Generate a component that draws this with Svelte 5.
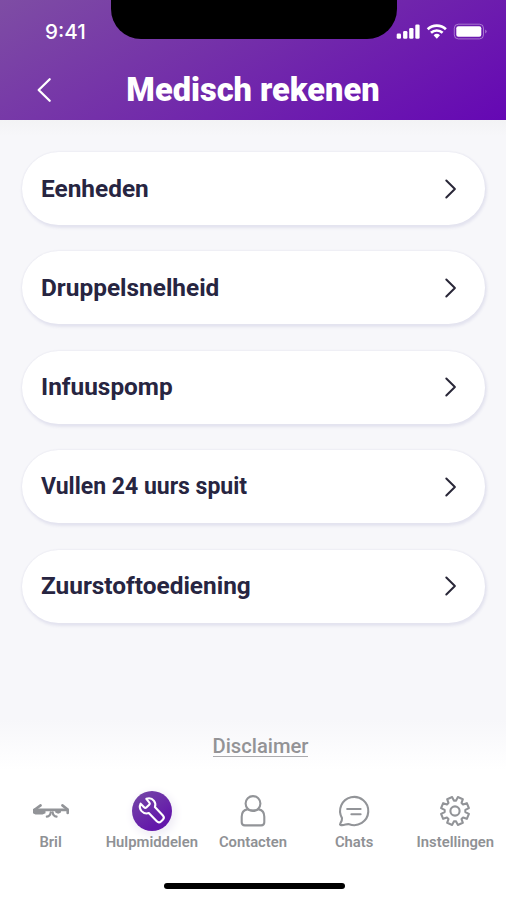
<script lang="ts">
	const items = [
		{ label: 'Eenheden' },
		{ label: 'Druppelsnelheid' },
		{ label: 'Infuuspomp' },
		{ label: 'Vullen 24 uurs spuit', long: true },
		{ label: 'Zuurstoftoediening' },
	]

	const tabs = [
		{ id: 'bril', label: 'Bril' },
		{ id: 'tools', label: 'Hulpmiddelen' },
		{ id: 'contacts', label: 'Contacten' },
		{ id: 'chats', label: 'Chats' },
		{ id: 'settings', label: 'Instellingen' },
	]

	let active = $state('tools')

	// outline of an eight-toothed gear, centred on 20,20
	const gear = Array.from({ length: 8 }, (_, i) => {
		const point = (radius: number, degrees: number) => {
			const a = ((i * 45 + degrees) * Math.PI) / 180
			return `${(20 + radius * Math.cos(a)).toFixed(2)},${(20 + radius * Math.sin(a)).toFixed(2)}`
		}
		return [point(10.4, 6), point(14.2, 11.5), point(14.2, 33.5), point(10.4, 39)].join(' ')
	}).join(' ')
</script>

<main class="screen">
	<header>
		<div class="notch"></div>
		<div class="status">
			<time>9:41</time>
			<svg width="92" height="18" viewBox="0 0 92 18" fill="none">
				<g fill="#fff">
					<rect x="0.7" y="10.5" width="4.3" height="5.2" rx="1.3" />
					<rect x="7.1" y="8" width="4.3" height="7.7" rx="1.3" />
					<rect x="13.2" y="5" width="4.3" height="10.7" rx="1.3" />
					<rect x="19.3" y="1.5" width="4.3" height="14.2" rx="1.3" />
					<path d="M37.6 12.3a4.8 4.8 0 0 1 6.4 0l-3.2 3.5z" />
					<rect x="60.3" y="3.3" width="25" height="10.5" rx="2" />
					<path d="M89.2 6.4q3 2.1 0 4.2z" opacity=".4" />
				</g>
				<path d="M31.7 6.2a13.2 13.2 0 0 1 18.2 0M35 9.8a8.5 8.5 0 0 1 11.6 0" stroke="#fff" stroke-width="2.7" />
				<rect x="58.3" y="1.2" width="29.2" height="14.7" rx="4" stroke="#fff" stroke-width="1" opacity=".4" />
			</svg>
		</div>
		<div class="title-bar">
			<button class="back" aria-label="Terug">
				<svg width="16" height="26" viewBox="0 0 16 26"><path d="M13.7 2.3 2.7 13l11 10.7" /></svg>
			</button>
			<h1>Medisch rekenen</h1>
		</div>
	</header>

	<section class="list">
		{#each items as item}
			<button class="card" class:long={item.long}>
				<span>{item.label}</span>
				<svg width="14" height="22" viewBox="0 0 14 22"><path d="m2.3 2.5 8.6 8.5-8.6 8.5" /></svg>
			</button>
		{/each}
	</section>

	<footer>
		<a class="disclaimer" href="#disclaimer">Disclaimer</a>
		<nav>
			{#each tabs as tab}
				<button class="tab" onclick={() => (active = tab.id)}>
					<span class="icon" class:active={active === tab.id}>
						<svg width="40" height="40" viewBox="0 0 40 40">
							{#if tab.id === 'bril'}
								<path class="temple" d="M4.2 18.2 9.6 14.4M36.4 18.2 31.4 14.4" />
								<path class="frame" d="M3.3 18.9h33.4v3" />
								<path class="solid" d="M2 18h12.5v4.2l-3 1.4H4.4L2 22.2zM24 18h6.5l-.8 3.8-2.6.9-2.8-1.2z" />
								<path class="nose" d="M15.8 25.6q3.6-.4 3.9-4.2M25.6 25.6q-3.6-.4-3.9-4.2" />
							{:else if tab.id === 'tools'}
								<path
									class="wrench"
									transform="translate(-.9 -.7)"
									d="M15.2 8.5c2.7-1 5.9-.2 7.7 2.1 1.4 1.8 1.7 4.1.9 6.2l8 8.3c1.2 1.3 1.1 3.1-.1 4.3l-1.8 1.7c-1.2 1.1-3 1.1-4.2-.1l-8-8.2c-2.5.8-5.4 0-7.2-2-1.8-2.1-2.2-4.9-1-7.4l3.5 3.6q1.2 1.2 2.5 0l2.6-2.5q1.2-1.2 0-2.4z"
								/>
							{:else if tab.id === 'contacts'}
								<circle cx="20" cy="12.5" r="7.4" />
								<path d="M14.1 18.4c-3.5.7-5.4 3.6-5.4 7.4v5.5q0 3.1 3.1 3.1h16.4q3.1 0 3.1-3.1v-5.5c0-3.8-1.9-6.7-5.4-7.4q-5.9 2.4-11.8 0z" />
							{:else if tab.id === 'chats'}
								<path d="M8 27.1a14.1 14.1 0 1 1 7.2 6.1c-2.7-.7-4.6 1.4-8.1.9q-1.7-.2-.8-1.6c1-1.7 2-3.5 1.7-5.4z" />
								<path class="line" d="M13.2 18h13.4M17.4 23.3h9.2" />
							{:else}
								<polygon points={gear} />
								<circle cx="20" cy="20" r="4.6" />
							{/if}
						</svg>
					</span>
					<span class="label">{tab.label}</span>
				</button>
			{/each}
		</nav>
		<div class="home-indicator"></div>
	</footer>
</main>

<style>
	:global(body) {
		margin: 0;
		background: #fff;
	}

	.screen {
		display: flex;
		flex-direction: column;
		box-sizing: border-box;
		width: 507px;
		height: 900px;
		overflow: hidden;
		padding-right: 1px;
		background: #fff;
		font-family: Roboto, 'Liberation Sans', sans-serif;
	}

	button {
		margin: 0;
		border: 0;
		background: none;
		padding: 0;
		font: inherit;
		cursor: pointer;
	}

	svg {
		display: block;
	}

	header {
		position: relative;
		flex: none;
		height: 119.5px;
		background: linear-gradient(150deg, #7e4da4 0%, #7430a9 42%, #6507b4 100%);
		color: #fff;
	}

	.notch {
		position: absolute;
		top: 0;
		left: 111px;
		width: 286px;
		height: 38.5px;
		border-radius: 0 0 30px 30px;
		background: #000;
	}

	.status {
		display: flex;
		justify-content: space-between;
		align-items: center;
		box-sizing: border-box;
		height: 62px;
		padding: 2px 18px 0 45px;
	}

	.status time {
		padding-bottom: 2px;
		font-weight: 500;
		font-size: 20.6px;
		font-family: Inter, Roboto, sans-serif;
	}

	.title-bar {
		display: grid;
		grid-template-columns: 90px 1fr 90px;
		align-items: center;
		height: 56px;
	}

	.back {
		justify-self: start;
		margin-left: 36px;
	}

	.back path,
	.card path {
		fill: none;
		stroke: #fff;
		stroke-width: 2.3;
		stroke-linecap: round;
		stroke-linejoin: round;
	}

	h1 {
		margin: 0;
		font-weight: 900;
		font-size: 32.6px;
		line-height: 40px;
		text-align: center;
		white-space: nowrap;
	}

	.list {
		display: flex;
		flex: 1;
		flex-direction: column;
		gap: 26.4px;
		background: linear-gradient(#f3f3f5 0, #f7f7fa 16px);
		padding: 32.5px 21px 0 22px;
	}

	.card {
		display: flex;
		flex: none;
		justify-content: space-between;
		align-items: center;
		box-sizing: border-box;
		height: 73px;
		border-radius: 37px;
		box-shadow:
			1px 2px 3px 1px #e3e3ef,
			0 0 2px #e3e3ec;
		background: #fff;
		padding: 0 27px 0 19px;
		color: #272541;
		font-weight: 700;
		font-size: 24.4px;
	}

	.card span {
		padding-bottom: 1px;
	}

	.card.long {
		font-size: 23px;
	}

	.card.long span {
		padding-bottom: 0;
	}

	.card path {
		stroke: #292738;
		stroke-width: 2;
	}

	footer {
		display: flex;
		flex: none;
		flex-direction: column;
		align-items: center;
		height: 180px;
		background: linear-gradient(#f7f7fa, #fff 50px);
	}

	.disclaimer {
		margin: 16px 0 0 15px;
		border-bottom: 1.5px solid #ababae;
		color: #939396;
		font-weight: 500;
		font-size: 20.2px;
		line-height: 20px;
		text-decoration: none;
	}

	nav {
		display: grid;
		grid-template-columns: repeat(5, 101.2px);
		width: 506px;
		margin-top: 34px;
	}

	.tab {
		display: flex;
		flex-direction: column;
		align-items: center;
		color: #8f9195;
	}

	.icon {
		border-radius: 50%;
	}

	.icon svg {
		fill: none;
		stroke: #929498;
		stroke-width: 2.1;
		stroke-linejoin: round;
		stroke-linecap: round;
	}

	.icon.active {
		background: linear-gradient(145deg, #764aa7, #6418aa 75%);
		box-shadow: 2px 3px 8px 2px #f0edf6;
	}

	.icon.active svg {
		stroke: #fff;
	}

	.icon .solid {
		fill: #929498;
		stroke: none;
	}

	.icon .temple,
	.icon .frame {
		stroke-width: 2.6;
	}

	.label {
		margin-top: 2px;
		font-weight: 600;
		font-size: 14.8px;
		line-height: 18px;
	}

	.home-indicator {
		width: 181px;
		height: 6px;
		margin: 32px 0 0 2px;
		border-radius: 3px;
		background: #000;
	}
</style>
